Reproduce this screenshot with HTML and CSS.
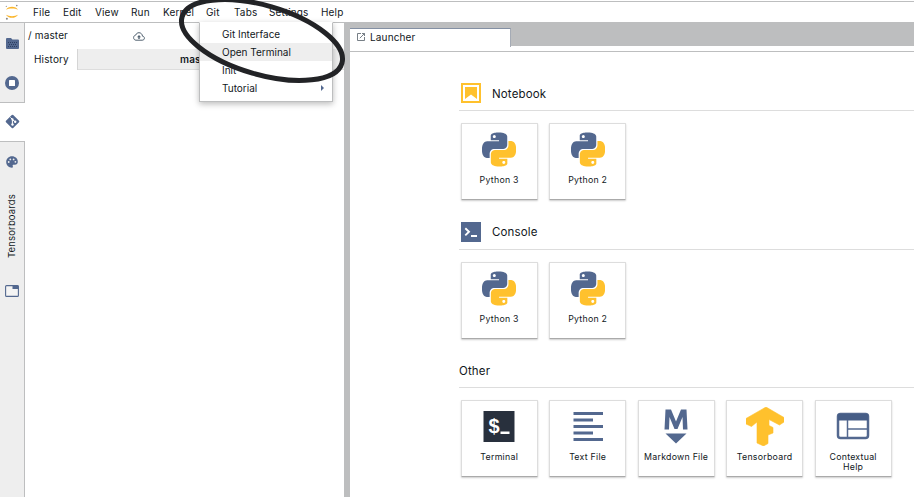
FILE: index.html
```html
<!DOCTYPE html>
<html lang="en">
<head>
<meta charset="utf-8">
<title>JupyterLab</title>
<link rel="stylesheet" href="styles.css">
</head>
<body>
<svg class="defs" width="0" height="0">
  <symbol id="python" viewBox="0 0 24 24">
    <path fill="#53688f" d="M14.25.18l.9.2.73.26.59.3.45.32.34.34.25.34.16.33.1.3.04.26.02.2-.01.13V8.5l-.05.63-.13.55-.21.46-.26.38-.3.31-.33.25-.35.19-.35.14-.33.1-.3.07-.26.04-.21.02H8.77l-.69.05-.59.14-.5.22-.41.27-.33.32-.27.35-.2.36-.15.37-.1.35-.07.32-.04.27-.02.21v3.06H3.17l-.21-.03-.28-.07-.32-.12-.35-.18-.36-.26-.36-.36-.35-.46-.32-.59-.28-.73-.21-.88-.14-1.05-.05-1.23.06-1.22.16-1.04.24-.87.32-.71.36-.57.4-.44.42-.33.42-.24.4-.16.36-.1.32-.05.24-.01h.16l.06.01h8.16v-.83H6.18l-.01-2.75-.02-.37.05-.34.11-.31.17-.28.25-.26.31-.23.38-.2.44-.18.51-.15.58-.12.64-.1.71-.06.77-.04.84-.02 1.27.05zm-6.3 1.98l-.23.33-.08.41.08.41.23.34.33.22.41.09.41-.09.33-.22.23-.34.08-.41-.08-.41-.23-.33-.33-.22-.41-.09-.41.09z"/>
    <path fill="#ffc12d" d="M21.1 6.11l.28.06.32.12.35.18.36.27.36.35.35.47.32.59.28.73.21.88.14 1.04.05 1.23-.06 1.23-.16 1.04-.24.86-.32.71-.36.57-.4.45-.42.33-.42.24-.4.16-.36.09-.32.05-.24.02-.16-.01h-8.22v.82h5.84l.01 2.76.02.36-.05.34-.11.31-.17.29-.25.25-.31.24-.38.2-.44.17-.51.15-.58.13-.64.09-.71.07-.77.04-.84.01-1.27-.04-1.07-.14-.9-.2-.73-.25-.59-.3-.45-.33-.34-.34-.25-.34-.16-.33-.1-.3-.04-.25-.02-.2.01-.13v-5.34l.05-.64.13-.54.21-.46.26-.38.3-.32.33-.24.35-.2.35-.14.33-.1.3-.06.26-.04.21-.02.13-.01h5.84l.69-.05.59-.14.5-.21.41-.28.33-.32.27-.35.2-.36.15-.36.1-.35.07-.32.04-.28.02-.21V6.07h2.09l.14.01zm-6.47 14.25l-.23.33-.08.41.08.41.23.33.33.23.41.08.41-.08.33-.23.23-.33.08-.41-.08-.41-.23-.33-.33-.23-.41-.08-.41.08z"/>
  </symbol>
</svg>

<header class="menubar">
  <svg class="logo" width="14" height="16" viewBox="0 0 14 16">
    <path d="M1 5.800C3 1.700 11 1.700 13 5.800 10 3.900 4 3.900 1 5.800zM1 10.800C3 14.900 11 14.900 13 10.800 10 12.700 4 12.700 1 10.800z" fill="#fbb62c"/>
    <circle cx="11.800" cy="1.600" r=".8" fill="#888"/><circle cx="1.300" cy="2.300" r=".6" fill="#888"/><circle cx="1.900" cy="14.700" r="1" fill="#888"/>
  </svg>
  <nav class="menus">
    <span class="m-file">File</span><span class="m-edit">Edit</span><span class="m-view">View</span><span class="m-run">Run</span><span class="m-kernel">Kernel</span><span class="m-git">Git</span><span class="m-tabs">Tabs</span><span class="m-settings">Settings</span><span class="m-help">Help</span>
  </nav>
</header>

<main class="workspace">
  <aside class="sidebar">
    <div class="side-top">
      <svg width="13" height="11" viewBox="0 0 13 11"><path d="M1 0h4l1.400 1.400H12q1 0 1 1V10q0 1-1 1H1q-1 0-1-1V1q0-1 1-1z" fill="#53688f"/><path d="M2 4.500h9M3 6.500h7M2 8.500h9" stroke="#2c3e60" stroke-dasharray="1 1"/></svg>
      <svg width="14" height="14" viewBox="0 0 14 14"><circle cx="7" cy="7" r="7" fill="#53688f"/><rect x="4" y="4" width="6" height="6" rx=".6" fill="#fff"/></svg>
    </div>
    <div class="side-active">
      <svg width="15" height="15" viewBox="0 0 15 15"><rect x="2.400" y="2.400" width="10.200" height="10.200" rx="1" transform="rotate(45 7.500 7.500)" fill="#53688f"/><path d="M5.400 3.400l2 2v5.200M7.500 5.500l2.800 2.500" stroke="#fff" fill="none"/><circle cx="7.500" cy="5.400" r="1.100" fill="#fff"/><circle cx="7.500" cy="10.500" r="1.200" fill="#fff"/><circle cx="10.200" cy="7.800" r="1.200" fill="#fff"/></svg>
    </div>
    <div class="side-rest">
      <svg width="12" height="12" viewBox="0 0 12 12"><path d="M6 .3C2.700.3.2 2.800.2 6s2.500 5.700 5.800 5.700c.9 0 1.200-.8.8-1.500-.5-.8 0-1.500.9-1.500h1.200c1.700 0 2.900-1.100 2.900-3C11.800 2.600 9.200.300 6 .300z" fill="#53688f"/><g fill="#eee"><circle cx="2.700" cy="6" r=".9"/><circle cx="4.300" cy="3.400" r=".9"/><circle cx="7.600" cy="3.400" r=".9"/><circle cx="9.400" cy="5.800" r=".9"/></g></svg>
      <span class="vertical">Tensorboards</span>
      <svg width="14" height="12" viewBox="0 0 14 12"><rect x=".6" y=".6" width="12.800" height="10.800" rx="1" fill="#f4f4f4" stroke="#53688f" stroke-width="1.100"/><path d="M7.500.500H13.500V4H7.500z" fill="#53688f"/></svg>
    </div>
  </aside>

  <section class="git-panel">
    <div class="branch"><span>/ master</span>
      <svg width="12" height="9" viewBox="0 0 12 9"><path d="M3 8.200H9.200C10.500 8.200 11.400 7.400 11.400 6.200 11.400 5 10.600 4.200 9.500 4.200 9.300 2.100 7.800.700 6 .700 4.500.700 3.200 1.600 2.700 3.100 1.500 3.300.600 4.300.600 5.600.600 7.100 1.600 8.200 3 8.200z" fill="none" stroke="#50606f"/><path d="M6 3L8 5.200H6.700V7H5.300V5.200H4z" fill="#50606f"/></svg>
    </div>
    <div class="git-tabs"><span class="history">History</span><span class="current">master</span></div>
  </section>

  <section class="dock">
    <div class="dock-tabs">
      <div class="dock-tab">
        <svg width="8" height="8" viewBox="0 0 8 8"><path d="M4 .500H.500V7.500H7.500V4M5 .500H7.500V3M7.500.500L2.800 5.200" fill="none" stroke="#687078" stroke-width=".9"/></svg>
        <span>Launcher</span>
      </div>
    </div>
    <div class="launcher">
      <section class="group">
        <h2><svg width="20" height="20" viewBox="0 0 20 20"><path d="M0 0H20V20H0z" fill="#ffc12d"/><path d="M2 2H18V18H2z" fill="#fff"/><path d="M4 4H16V16L10 11.500 4 16z" fill="#ffc12d"/></svg><span>Notebook</span></h2>
        <div class="cards">
          <div class="card"><svg width="34" height="35"><use href="#python"/></svg><p>Python 3</p></div>
          <div class="card"><svg width="34" height="35"><use href="#python"/></svg><p>Python 2</p></div>
        </div>
      </section>
      <section class="group">
        <h2><svg width="20" height="20" viewBox="0 0 20 20"><path d="M0 0H20V20H0z" fill="#53688f"/><path d="M4.300 6.200L8 9.800 4.300 13.400M10 14H16" fill="none" stroke="#fff" stroke-width="1.900"/></svg><span>Console</span></h2>
        <div class="cards">
          <div class="card"><svg width="34" height="35"><use href="#python"/></svg><p>Python 3</p></div>
          <div class="card"><svg width="34" height="35"><use href="#python"/></svg><p>Python 2</p></div>
        </div>
      </section>
      <section class="group">
        <h2><span>Other</span></h2>
        <div class="cards">
          <div class="card"><svg width="34" height="35" viewBox="0 0 34 35"><path d="M1.500 2H32.500V33H1.500z" fill="#28303d"/><text x="6.500" y="24" class="dollar">$</text><path d="M18.500 22.500H27.500V25H18.500z" fill="#fff"/></svg><p>Terminal</p></div>
          <div class="card"><svg width="34" height="35" viewBox="0 0 34 35"><path d="M2.500 4.500H32M2.500 11H22M2.500 17.500H32M2.500 24H22M2.500 30.500H32" stroke="#53688f" stroke-width="3"/></svg><p>Text File</p></div>
          <div class="card"><svg width="34" height="35" viewBox="0 0 34 35"><path d="M5.500 20.500L6.500.500H12L17 12.500 22 .500H27.500L28.500 20.500H24L23.500 8 18.500 20H15.500L10.500 8 10 20.500zM6.500 24.500H27.500L17 34.500z" fill="#53688f"/></svg><p>Markdown File</p></div>
          <div class="card"><svg class="wide" width="38" height="39" viewBox="0 0 38 39"><path d="M22 0L40 10.500V15L35.500 18 25 12.500V18.500L29 20.500V26L24 28V36.500L19.500 39 13 36V15L7.500 19.500 2 17V11.500z" transform="translate(-2 0)" fill="#ffc12d" stroke="#ffc12d" stroke-width=".6"/></svg><p>Tensorboard</p></div>
          <div class="card"><svg width="34" height="35" viewBox="0 0 34 35"><rect x="2" y="5" width="30" height="24" rx="2.500" fill="#fff" stroke="#53688f" stroke-width="2.500"/><path d="M2 5H32V11.500H2z" fill="#465d86"/><path d="M11.500 11V29M11.500 20H32" stroke="#53688f" stroke-width="1.500"/></svg><p>Contextual<br>Help</p></div>
        </div>
      </section>
    </div>
  </section>
</main>

<div class="dropdown">
  <div class="item">Git Interface</div>
  <div class="item hover">Open Terminal</div>
  <div class="item">Init</div>
  <div class="item">Tutorial<i class="caret"></i></div>
</div>

<svg class="marker" width="914" height="497"><ellipse cx="262" cy="40" rx="83.200" ry="34.500" transform="rotate(16.200 262 40)" fill="none" stroke="#222326" stroke-width="5"/></svg>
</body>
</html>
```
FILE: styles.css
```css
* { box-sizing: border-box; }
body {
  margin: 0;
  width: 914px;
  height: 497px;
  overflow: hidden;
  display: flex;
  flex-direction: column;
  background: #fff;
  color: #111722;
  font: 10px/12px Inter, sans-serif;
  letter-spacing: 0.15px;
}
svg { display: block; flex: none; }
.defs { position: absolute; }
.menubar {
  margin-top: 1px;
  flex: none;
  display: flex;
  align-items: center;
  height: 22px;
  border-top: 1px solid #bdbebf;
  border-bottom: 1px solid #bdbebf;
}
.logo { margin-left: 5px; }
.menus { display: flex; margin-left: 14px; }
.menus span { white-space: nowrap; }
.m-file { width: 30px; }
.m-edit { width: 32px; }
.m-view { width: 36px; }
.m-run { width: 32px; }
.m-kernel { width: 43px; }
.m-git { width: 28px; }
.m-tabs { width: 35px; }
.m-settings { width: 52px; }
.workspace { flex: 1; min-height: 0; display: flex; }
.sidebar {
  width: 25px;
  display: flex;
  flex-direction: column;
}
.side-top, .side-rest {
  background: #eee;
  border-right: 1px solid #bdbebf;
  display: flex;
  flex-direction: column;
  align-items: center;
}
.side-top { height: 80px; border-bottom: 1px solid #bdbebf; padding-top: 15px; gap: 27px; }
.side-active { height: 38px; display: flex; justify-content: center; padding: 11px 1px 0 0; }
.side-rest { flex: 1; border-top: 1px solid #bdbebf; padding-top: 14px; }
.vertical {
  writing-mode: vertical-rl;
  transform: rotate(180deg);
  margin: 25px 0 26px;
  height: 66px;
  text-align: center;
  white-space: nowrap;
  font-size: 9.5px;
}
.git-panel { width: 319px; }
.branch { height: 26px; display: flex; align-items: center; padding-left: 3px; }
.branch span { width: 105px; padding-bottom: 3px; }
.git-tabs { height: 21px; display: flex; background: #eee; border-bottom: 1px solid #ddd; }
.history {
  width: 53px;
  height: 21px;
  padding: 4px 0 0 9px;
  background: #fff;
  border-right: 1px solid #d5d5d5;
}
.current { flex: 1; padding: 4px 0 0 102px; font-weight: 600; }
.dock {
  flex: 1;
  min-width: 0;
  border-left: 6px solid #bdbebf;
  display: flex;
  flex-direction: column;
}
.dock-tabs {
  height: 29px;
  flex: none;
  padding-top: 5px;
  background: linear-gradient(#bdbebf 23px, #fff 23px);
  border-bottom: 1px solid #bdbebf;
}
.dock-tab {
  width: 161px;
  height: 19px;
  display: flex;
  align-items: center;
  gap: 5px;
  padding: 0 0 3px 7px;
  background: #fff;
  border-top: 1px solid #8490a4;
  border-right: 1px solid #a5abb5;
}
.launcher { padding: 31px 0 0 109px; }
.group { height: 138.5px; }
.group h2 {
  height: 28px;
  margin: 0;
  padding: 0 0 7px 2px;
  display: flex;
  align-items: center;
  gap: 11px;
  font-size: 11.5px;
  font-weight: 400;
  border-bottom: 1px solid #ddd;
}
.group h2 span { padding-top: 1px; }
.group:last-child h2 { padding-left: 0; }
.cards { display: flex; gap: 11.5px; padding: 12px 0 0 1.8px; }
.card {
  width: 76.8px;
  margin-right: 0.2px;
  height: 77px;
  flex: none;
  display: flex;
  flex-direction: column;
  align-items: center;
  padding-top: 8px;
  border: 1px solid #ddd;
  border-bottom: 1px solid #aaa;
  border-radius: 1px;
  box-shadow: 0 1px 2px #ccc;
}
.card p { margin: 8px -4px 0; font-size: 8.8px; line-height: 10px; text-align: center; white-space: nowrap; letter-spacing: 0.25px; }
.card .wide { margin: -2px 0 -2px; }
.dollar { fill: #fff; font: bold 20px "Liberation Sans", sans-serif; }
.dropdown {
  position: absolute;
  left: 199px;
  top: 22px;
  width: 134px;
  height: 80px;
  padding-top: 2px;
  background: #fff;
  border: 1px solid #bdbebf;
  border-top-color: #fff;
  box-shadow: 0 2px 6px #0004;
}
.item { height: 18px; display: flex; align-items: center; padding: 0 8px 0 22px; letter-spacing: 0; }
.item.hover { background: #eee; }
.caret { margin-left: auto; border: 3px solid transparent; border-left: 3px solid #53688f; border-right: 0; }
.marker { position: absolute; left: 0; top: 0; }
```
